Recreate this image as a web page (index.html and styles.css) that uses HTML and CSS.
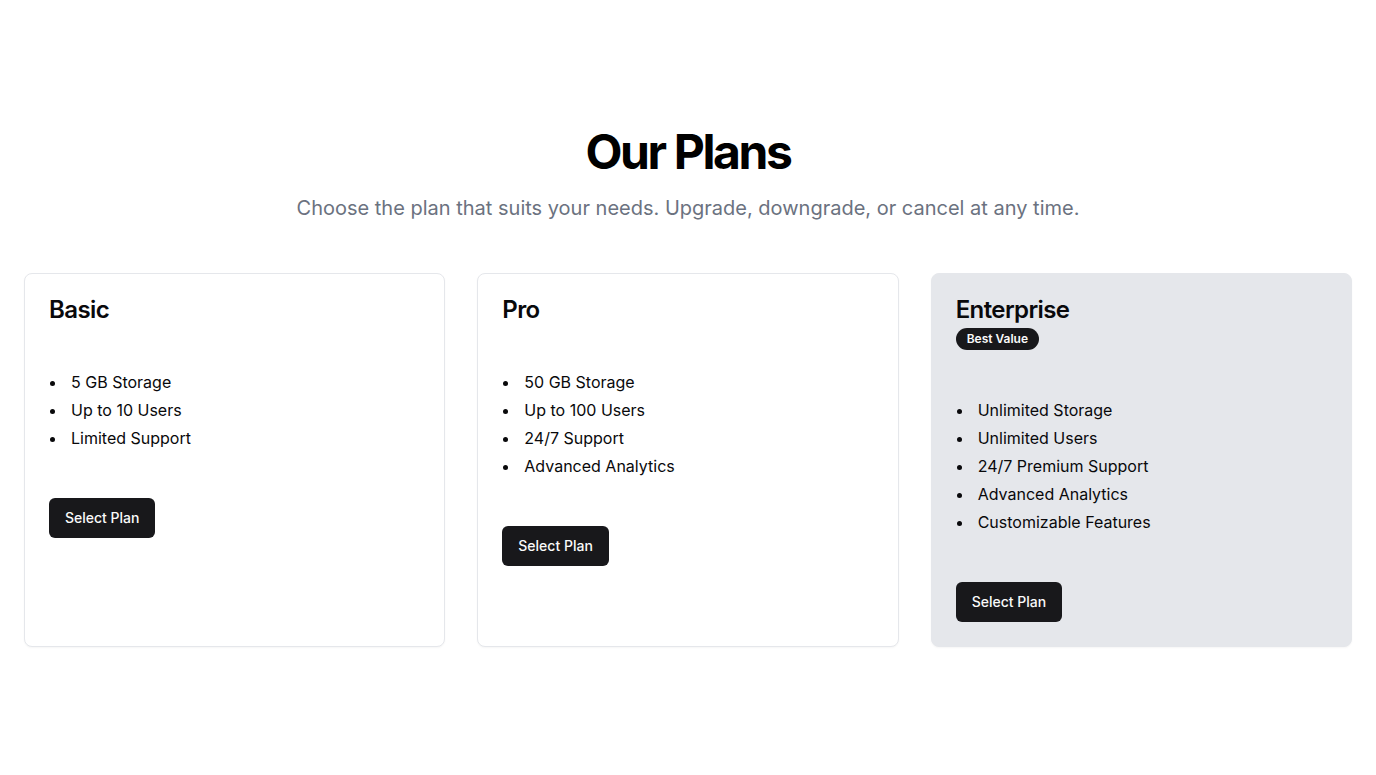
FILE: index.html
```html
<!DOCTYPE html>
<html lang="en">
<head>
<meta charset="utf-8">
<title>Our Plans</title>
<link rel="stylesheet" href="styles.css">
</head>
<body>
<section class="pricing">
  <header class="intro">
    <h1 class="headline">Our Plans</h1>
    <p class="lead">Choose the plan that suits your needs. Upgrade, downgrade, or cancel at any time.</p>
  </header>
  <div class="plans">
    <article class="card">
      <div class="card-head">
        <h2 class="card-title">Basic</h2>
      </div>
      <ul class="features">
        <li>5 GB Storage</li>
        <li>Up to 10 Users</li>
        <li>Limited Support</li>
      </ul>
      <div class="card-foot">
        <button class="btn">Select Plan</button>
      </div>
    </article>
    <article class="card">
      <div class="card-head">
        <h2 class="card-title">Pro</h2>
      </div>
      <ul class="features">
        <li>50 GB Storage</li>
        <li>Up to 100 Users</li>
        <li>24/7 Support</li>
        <li>Advanced Analytics</li>
      </ul>
      <div class="card-foot">
        <button class="btn">Select Plan</button>
      </div>
    </article>
    <article class="card card-featured">
      <div class="card-head">
        <h2 class="card-title">Enterprise</h2>
        <span class="badge">Best Value</span>
      </div>
      <ul class="features">
        <li>Unlimited Storage</li>
        <li>Unlimited Users</li>
        <li>24/7 Premium Support</li>
        <li>Advanced Analytics</li>
        <li>Customizable Features</li>
      </ul>
      <div class="card-foot">
        <button class="btn">Select Plan</button>
      </div>
    </article>
  </div>
</section>
</body>
</html>
```
FILE: styles.css
```css
* { box-sizing: border-box; }
html, body { margin: 0; padding: 0; }
body {
  font-family: Inter, "Noto Sans", "Liberation Sans", sans-serif;
  color: #09090b;
  background: #ffffff;
}
.pricing {
  padding: 128px 24px 48px;
}
.intro {
  display: flex;
  flex-direction: column;
  align-items: center;
  text-align: center;
  gap: 18px;
}
.headline {
  margin: 0;
  font-size: 48px;
  line-height: 48px;
  font-weight: 700;
  letter-spacing: -0.05em;
  color: #000;
}
.lead {
  margin: 0;
  font-size: 20px;
  line-height: 28px;
  color: #6b7280;
}
.plans {
  margin-top: 51px;
  display: grid;
  grid-template-columns: repeat(3, 1fr);
  gap: 32px;
}
.card {
  display: flex;
  flex-direction: column;
  border: 1px solid #e5e7eb;
  border-radius: 8px;
  background: #fff;
  padding: 24px;
  box-shadow: 0 1px 2px rgba(0,0,0,0.04);
}
.card-featured {
  background: #e5e7eb;
  border-color: #e5e7eb;
}
.card-head {
  display: flex;
  flex-direction: column;
  align-items: flex-start;
  gap: 6px;
}
.card-title {
  margin: 0;
  font-size: 24px;
  line-height: 24px;
  font-weight: 600;
  letter-spacing: -0.025em;
}
.badge {
  display: inline-flex;
  align-items: center;
  border-radius: 9999px;
  background: #18181b;
  color: #fafafa;
  font-size: 12px;
  line-height: 16px;
  font-weight: 600;
  padding: 3px 11px;
}
.features {
  margin: 48px 0;
  padding: 0;
  list-style: none;
  display: flex;
  flex-direction: column;
  gap: 4px;
}
.features li {
  display: flex;
  align-items: flex-start;
  font-size: 16px;
  line-height: 24px;
}
.features li::before {
  content: "";
  flex: none;
  width: 5px;
  height: 5px;
  margin: 11px 16px 0 1px;
  border-radius: 50%;
  background: currentColor;
}
.card-foot {
  display: flex;
  align-items: center;
}
.btn {
  height: 40px;
  padding: 0 16px 1px;
  border: 0;
  border-radius: 6px;
  background: #18181b;
  color: #fafafa;
  font-family: inherit;
  font-size: 14px;
  font-weight: 500;
  cursor: pointer;
}
```
